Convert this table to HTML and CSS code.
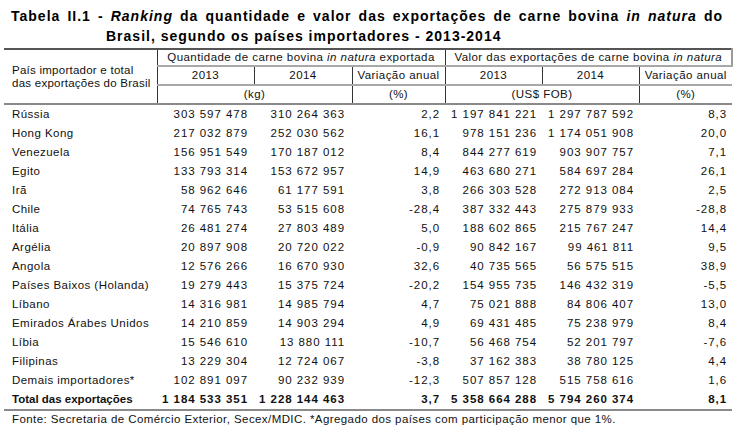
FILE: index.html
```html
<!DOCTYPE html>
<html lang="pt">
<head>
<meta charset="utf-8">
<title>Tabela II.1</title>
<link rel="stylesheet" href="styles.css">
</head>
<body>
<div class="page">
  <h1 class="title">
    <span class="t1">Tabela II.1 - <em>Ranking</em> da quantidade e valor das exportações de carne bovina <em>in natura</em> do</span>
    <span class="t2">Brasil, segundo os países importadores - 2013-2014</span>
  </h1>
  <table class="data">
    <colgroup>
      <col class="c-name">
      <col class="c-num">
      <col class="c-num2">
      <col class="c-var">
      <col class="c-num">
      <col class="c-num">
      <col class="c-var">
    </colgroup>
    <thead>
      <tr class="h1">
        <th rowspan="3" class="h-name">País importador e total<br>das exportações do Brasil</th>
        <th colspan="3" class="vl">Quantidade de carne bovina <em>in natura</em> exportada</th>
        <th colspan="3" class="vl last">Valor das exportações de carne bovina <em>in natura</em></th>
      </tr>
      <tr class="h2">
        <th class="vl">2013</th>
        <th class="vl">2014</th>
        <th class="vl">Variação anual</th>
        <th class="vl">2013</th>
        <th class="vl">2014</th>
        <th class="vl">Variação anual</th>
      </tr>
      <tr class="h3">
        <th colspan="2" class="vl">(kg)</th>
        <th class="vl">(%)</th>
        <th colspan="2" class="vl">(US$ FOB)</th>
        <th class="vl">(%)</th>
      </tr>
    </thead>
    <tbody>
      <tr><td>Rússia</td><td>303 597 478</td><td>310 264 363</td><td>2,2</td><td>1 197 841 221</td><td>1 297 787 592</td><td>8,3</td></tr>
      <tr><td>Hong Kong</td><td>217 032 879</td><td>252 030 562</td><td>16,1</td><td>978 151 236</td><td>1 174 051 908</td><td>20,0</td></tr>
      <tr><td>Venezuela</td><td>156 951 549</td><td>170 187 012</td><td>8,4</td><td>844 277 619</td><td>903 907 757</td><td>7,1</td></tr>
      <tr><td>Egito</td><td>133 793 314</td><td>153 672 957</td><td>14,9</td><td>463 680 271</td><td>584 697 284</td><td>26,1</td></tr>
      <tr><td>Irã</td><td>58 962 646</td><td>61 177 591</td><td>3,8</td><td>266 303 528</td><td>272 913 084</td><td>2,5</td></tr>
      <tr><td>Chile</td><td>74 765 743</td><td>53 515 608</td><td>-28,4</td><td>387 332 443</td><td>275 879 933</td><td>-28,8</td></tr>
      <tr><td>Itália</td><td>26 481 274</td><td>27 803 489</td><td>5,0</td><td>188 602 865</td><td>215 767 247</td><td>14,4</td></tr>
      <tr><td>Argélia</td><td>20 897 908</td><td>20 720 022</td><td>-0,9</td><td>90 842 167</td><td>99 461 811</td><td>9,5</td></tr>
      <tr><td>Angola</td><td>12 576 266</td><td>16 670 930</td><td>32,6</td><td>40 735 565</td><td>56 575 515</td><td>38,9</td></tr>
      <tr><td>Países Baixos (Holanda)</td><td>19 279 443</td><td>15 375 724</td><td>-20,2</td><td>154 955 735</td><td>146 432 319</td><td>-5,5</td></tr>
      <tr><td>Líbano</td><td>14 316 981</td><td>14 985 794</td><td>4,7</td><td>75 021 888</td><td>84 806 407</td><td>13,0</td></tr>
      <tr><td>Emirados Árabes Unidos</td><td>14 210 859</td><td>14 903 294</td><td>4,9</td><td>69 431 485</td><td>75 238 979</td><td>8,4</td></tr>
      <tr><td>Líbia</td><td>15 546 610</td><td>13 880 111</td><td>-10,7</td><td>56 468 754</td><td>52 201 797</td><td>-7,6</td></tr>
      <tr><td>Filipinas</td><td>13 229 304</td><td>12 724 067</td><td>-3,8</td><td>37 162 383</td><td>38 780 125</td><td>4,4</td></tr>
      <tr><td>Demais importadores*</td><td>102 891 097</td><td>90 232 939</td><td>-12,3</td><td>507 857 128</td><td>515 758 616</td><td>1,6</td></tr>
      <tr class="total"><td>Total das exportações</td><td>1 184 533 351</td><td>1 228 144 463</td><td>3,7</td><td>5 358 664 288</td><td>5 794 260 374</td><td>8,1</td></tr>
    </tbody>
  </table>
  <p class="source">Fonte: Secretaria de Comércio Exterior, Secex/MDIC. *Agregado dos países com participação menor que 1%.</p>
</div>
</body>
</html>
```

FILE: styles.css
```css
html, body {
  margin: 0;
  padding: 0;
  background: #ffffff;
}

body {
  font-family: "Liberation Sans", Arial, sans-serif;
  color: #111111;
}

.page {
  width: 728px;
  padding: 0 0 0 4px;
}

.title {
  margin: 0;
  padding: 6px 9px 0 7px;
  font-size: 14px;
  font-weight: bold;
  line-height: 20px;
  letter-spacing: 1px;
  color: #000000;
}

.title em {
  font-style: italic;
}

.t1 {
  display: block;
  white-space: nowrap;
  text-align: justify;
  text-align-last: justify;
}

.t2 {
  display: block;
  padding-left: 95px;
}

.data {
  border-collapse: collapse;
  table-layout: fixed;
  width: 728px;
  margin-top: 2px;
  font-size: 11.5px;
  letter-spacing: 0.45px;
  border-top: 2px solid #555555;
}

.c-name { width: 153px; }
.c-num { width: 97px; }
.c-num2 { width: 98px; }
.c-var { width: 93px; }

.data th {
  font-weight: normal;
  padding: 0;
  text-align: center;
  white-space: nowrap;
  height: 17px;
  line-height: 17px;
  border-bottom: 2px solid #a8a8a8;
}

.data th em {
  font-style: italic;
}

.h1 th {
  height: 15px;
  line-height: 15px;
}

.data th.h-name {
  text-align: left;
  padding-left: 8px;
  line-height: 13px;
  letter-spacing: 0.25px;
  border-right: 1px solid #333333;
  border-bottom: 2px solid #8a8a8a;
}

.h3 th {
  border-bottom: 2px solid #8a8a8a;
}

.data th.vl {
  border-left: 1px solid #333333;
}

.data th.last {
  border-right: 2px solid #999999;
}

.data td {
  height: 19px;
  padding: 0 5px 0 0;
  text-align: right;
  white-space: nowrap;
  line-height: 19px;
  letter-spacing: 0.95px;
}

.data td:first-child {
  text-align: left;
  padding-left: 8px;
  letter-spacing: 0.45px;
}

.data td:nth-child(2) {
  padding-right: 6px;
}

.data td:nth-child(3) {
  padding-right: 7px;
}

.total td {
  font-weight: bold;
  border-bottom: 2px solid #8a8a8a;
}

.data .total td:first-child {
  letter-spacing: 0;
}

.source {
  margin: 0;
  padding: 0 0 0 8px;
  font-size: 11.5px;
  letter-spacing: 0.42px;
  line-height: 17px;
}
```
